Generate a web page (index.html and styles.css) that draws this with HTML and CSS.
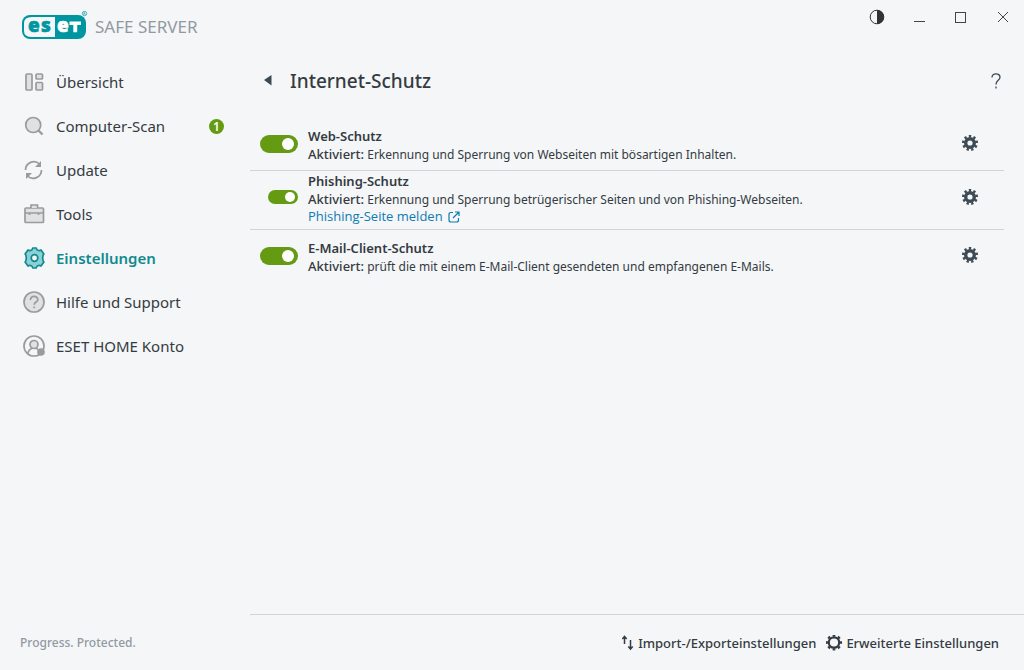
FILE: index.html
```html
<!DOCTYPE html>
<html lang="de">
<head>
  <meta charset="UTF-8" />
  <meta name="viewport" content="width=device-width, initial-scale=1.0"/>
  <title>ESET Safe Server</title>
  <link rel="stylesheet" href="styles.css">
</head>
<body>
  <!-- shared gear icon -->
  <svg class="defs" width="0" height="0" aria-hidden="true">
    <symbol id="gear" viewBox="0 0 16 16">
      <circle cx="8" cy="8" r="4.300" fill="none" stroke="currentColor" stroke-width="3.400"/>
      <circle cx="8" cy="8" r="6.700" fill="none" stroke="currentColor" stroke-width="2.600" pathLength="36" stroke-dasharray="2 2" stroke-dashoffset="1" transform="rotate(-90 8 8)"/>
    </symbol>
  </svg>

  <aside class="sidebar">
    <div class="brand">
      <svg class="logo" width="66" height="30" viewBox="0 0 66 30" role="img" aria-label="ESET">
        <rect x="0" y="5" width="64" height="24" rx="8" fill="#0096a1"/>
        <path d="M33 7H10Q2 7 2 13V21Q2 27 10 27H33Z" fill="#f4f6f8"/>
        <text class="logo-text" x="6 19" y="22" fill="#0096a1" stroke="#0096a1">es</text>
        <text class="logo-text" x="35" y="22" fill="#fff" stroke="#fff">e</text>
        <path d="M47.500 11.500H59V15H55.200V22.300H51.300V15H47.500Z" fill="#fff"/>
        <circle cx="62.500" cy="3.500" r="2.200" fill="none" stroke="#0096a1" stroke-width=".7"/>
        <path d="M61.900 4.800V2.500H62.700Q63.500 3.200 62.700 3.700H61.900M62.700 3.700L63.300 4.800" fill="none" stroke="#0096a1" stroke-width=".5"/>
      </svg>
      <span class="product">SAFE SERVER</span>
    </div>
    <nav class="menu">
      <a href="#">
        <svg width="24" height="24" viewBox="0 0 24 24" class="icon"><rect x="3" y="4" width="6" height="16" rx="1"/><rect x="13" y="4" width="6.500" height="5" rx="1"/><rect x="13" y="12.500" width="6.500" height="7.500" rx="1"/></svg>
        Übersicht
      </a>
      <a href="#">
        <svg width="24" height="24" viewBox="0 0 24 24" class="icon"><circle cx="10.200" cy="11" r="7.500"/><path d="M15.500 16.500L19.500 20.500" stroke-width="2.400"/></svg>
        Computer-Scan
        <span class="badge">1</span>
      </a>
      <a href="#">
        <svg width="24" height="24" viewBox="0 0 24 24" class="icon line"><path d="M2.500 12A8.300 8.300 0 0 1 16.500 6M18.500 12A8.300 8.300 0 0 1 4.500 18"/><path class="tip" d="M18 3V9H12ZM3 21V15H9Z"/></svg>
        Update
      </a>
      <a href="#">
        <svg width="24" height="24" viewBox="0 0 24 24" class="icon"><rect x="2" y="6" width="18.500" height="14.500" rx="1"/><path d="M8 6V3H14.500V6M2 11H20.500M6.500 11V13M15.500 11V13"/></svg>
        Tools
      </a>
      <a href="#" class="active" aria-current="page">
        <svg width="24" height="24" viewBox="0 0 24 24" class="icon"><path d="M8.200 4.200Q9.500 3.800 9.700 2H13.300Q13.500 3.800 14.800 4.200Q16.200 5 18 4L20.900 8Q19.500 9.500 19.800 12Q19.500 14.500 20.900 16L18 20Q16.200 19 14.800 19.800Q13.500 20.200 13.300 22H9.700Q9.500 20.200 8.200 19.800Q6.800 19 5 20L2.100 16Q3.500 14.500 3.200 12Q3.500 9.500 2.100 8L5 4Q6.800 5 8.200 4.200Z" stroke-linejoin="round"/><circle cx="11.500" cy="12" r="3.300" fill="#f4f6f8"/></svg>
        Einstellungen
      </a>
      <a href="#">
        <svg width="24" height="24" viewBox="0 0 24 24" class="icon"><circle cx="11" cy="12" r="10"/><path d="M7.500 10C7.500 5.300 14.800 5.300 14.800 9.800C14.800 12.200 11.200 12 11.200 14.800M11.200 16.500V18.200" fill="none"/></svg>
        Hilfe und Support
      </a>
      <a href="#">
        <svg width="24" height="24" viewBox="0 0 24 24" class="icon"><circle cx="11" cy="12" r="10" fill="none"/><path d="M5 19.500C5.300 16 7 15 9 14.500M17 19.500C16.700 16 15 15 13 14.500"/><circle cx="11" cy="10.500" r="4"/><circle class="dot" cx="18" cy="18" r="3.800"/></svg>
        ESET HOME Konto
      </a>
    </nav>
    <div class="slogan">Progress. Protected.</div>
  </aside>

  <main class="content">
    <div class="window-bar">
      <button aria-label="Kontrast"><svg width="16" height="16" viewBox="0 0 16 16"><circle cx="8" cy="8" r="6.800" fill="none" stroke="#333"/><path d="M8 1A7 7 0 0 1 8 15Z" fill="#333"/></svg></button>
      <button aria-label="Minimieren"><svg width="16" height="16" viewBox="0 0 16 16"><path d="M3 12.500H14" stroke="#444"/></svg></button>
      <button aria-label="Maximieren"><svg width="16" height="16" viewBox="0 0 16 16"><rect x="2.500" y="3.500" width="10" height="10" fill="none" stroke="#444"/></svg></button>
      <button aria-label="Schließen"><svg width="16" height="16" viewBox="0 0 16 16"><path d="M3 3L13 13M13 3L3 13" stroke="#444"/></svg></button>
    </div>

    <div class="title-row">
      <button class="back" aria-label="Zurück"><svg width="8" height="12" viewBox="0 0 8 12"><path d="M0 5L7.500 0V10.500Z" fill="#3c4a54"/></svg></button>
      <h1>Internet-Schutz</h1>
      <button class="help" aria-label="Hilfe"><svg width="12" height="18" viewBox="0 0 12 18"><path d="M2 5.500C2 .6 10 .6 10 5.200C10 8.500 6 8.200 6 12.500M6 14.500V16.500" fill="none" stroke="#3c4a54" stroke-width="1.300"/></svg></button>
    </div>

    <div class="modules">
      <div class="module">
        <div class="switch"><input type="checkbox" id="web" checked></div>
        <div class="text">
          <label for="web">Web-Schutz</label>
          <p><b>Aktiviert:</b> Erkennung und Sperrung von Webseiten mit bösartigen Inhalten.</p>
        </div>
        <button class="config" aria-label="Web-Schutz konfigurieren"><svg width="16" height="16"><use href="#gear"/></svg></button>
      </div>
      <div class="module sub">
        <div class="switch"><input type="checkbox" id="phishing" checked></div>
        <div class="text">
          <label for="phishing">Phishing-Schutz</label>
          <p><b>Aktiviert:</b> Erkennung und Sperrung betrügerischer Seiten und von Phishing-Webseiten.</p>
          <a href="#">Phishing-Seite melden <svg width="12" height="12" viewBox="0 0 12 12"><path d="M5 1.500H3Q1 1.500 1 3.500V9Q1 11 3 11H8.500Q10.500 11 10.500 9V7M7 1H11V5M11 1L5 7" fill="none" stroke="currentColor" stroke-width="1.200"/></svg></a>
        </div>
        <button class="config" aria-label="Phishing-Schutz konfigurieren"><svg width="16" height="16"><use href="#gear"/></svg></button>
      </div>
      <div class="module">
        <div class="switch"><input type="checkbox" id="mail" checked></div>
        <div class="text">
          <label for="mail">E-Mail-Client-Schutz</label>
          <p><b>Aktiviert:</b> prüft die mit einem E-Mail-Client gesendeten und empfangenen E-Mails.</p>
        </div>
        <button class="config" aria-label="E-Mail-Client-Schutz konfigurieren"><svg width="16" height="16"><use href="#gear"/></svg></button>
      </div>
    </div>

    <footer class="actions">
      <button>
        <svg width="12" height="16" viewBox="0 0 12 16"><path d="M2.500 9V2M.3 4L2.500 1.500L4.700 4M8.500 5V13.500M6.300 11.500L8.500 14L10.700 11.500" fill="none" stroke="currentColor" stroke-width="1.500"/></svg>
        Import-/Exporteinstellungen
      </button>
      <button>
        <svg width="16" height="16" viewBox="0 0 16 16"><circle cx="8" cy="7.500" r="5.200" fill="none" stroke="currentColor" stroke-width="2.200"/><circle cx="8" cy="7.500" r="6.900" fill="none" stroke="currentColor" stroke-width="2.200" pathLength="32" stroke-dasharray="2 2" stroke-dashoffset="1"/></svg>
        Erweiterte Einstellungen
      </button>
    </footer>
  </main>
</body>
</html>
```

FILE: styles.css
```css
* {
  box-sizing: border-box;
}

body {
  margin: 0;
  min-height: 100vh;
  display: grid;
  grid-template-columns: 250px 1fr;
  background: #f4f6f8;
  color: #343b42;
  font-family: "Noto Sans", "Open Sans", sans-serif;
  font-size: 13px;
  line-height: 18px;
}

.defs {
  position: absolute;
}

button {
  display: flex;
  align-items: center;
  padding: 0;
  border: none;
  background: none;
  color: inherit;
  font: inherit;
  cursor: pointer;
}

/* Sidebar */
.sidebar {
  display: flex;
  flex-direction: column;
  padding: 10px 20px 18px;
}

.brand {
  display: flex;
  align-items: center;
  gap: 7px;
  height: 30px;
  padding-left: 2px;
}

.logo-text {
  font-family: "Open Sans", sans-serif;
  font-size: 19px;
  font-weight: 800;
  stroke-width: 0.6;
}

.product {
  padding-top: 4px;
  color: #92999f;
  font-size: 17px;
}

.menu {
  margin-top: 20px;
}

.menu a {
  display: flex;
  align-items: center;
  gap: 9px;
  height: 44px;
  padding: 0 6px 0 3px;
  color: #343b42;
  font-size: 15px;
  text-decoration: none;
}

.menu .active {
  color: #118a8f;
  font-weight: 600;
}

.icon {
  fill: #dfe1e3;
  stroke: #999b9d;
  stroke-width: 1.7;
}

.icon.line {
  fill: none;
}

.icon .tip,
.icon .dot {
  fill: #999b9d;
  stroke: none;
}

.active .icon {
  fill: #8bd0d6;
  stroke: #118a8f;
}

.badge {
  width: 15px;
  margin-left: auto;
  border-radius: 50%;
  background: #649b12;
  color: #fff;
  font-size: 12px;
  font-weight: 600;
  line-height: 15px;
  text-align: center;
}

.slogan {
  margin-top: auto;
  color: #92999f;
  font-size: 12px;
  font-weight: 500;
}

/* Main area */
.content {
  display: flex;
  flex-direction: column;
}

.window-bar {
  display: flex;
  justify-content: flex-end;
  gap: 26px;
  padding: 9px 13px 0 0;
}

.title-row {
  display: flex;
  align-items: center;
  margin-top: 41px;
  padding: 0 22px 0 14px;
  height: 30px;
}

h1 {
  margin: 0 auto 0 18px;
  font-size: 19px;
  font-weight: 500;
  line-height: 30px;
}

.modules {
  margin: 22px 20px 0 0;
}

.module {
  display: flex;
  align-items: center;
  padding: 9px 26px 7px 0;
  border-bottom: 1px solid #d2d5d8;
}

.module:last-child {
  border-bottom: none;
}

.module.sub {
  padding-top: 1px;
  padding-bottom: 4px;
}

.switch {
  display: flex;
  justify-content: flex-end;
  width: 48px;
  padding-bottom: 2px;
}

.switch input {
  appearance: none;
  display: flex;
  align-items: center;
  justify-content: flex-end;
  width: 38px;
  height: 18px;
  margin: 0;
  padding-right: 4px;
  border-radius: 9px;
  background: #649b12;
}

.switch input::before {
  content: "";
  width: 12px;
  height: 12px;
  border-radius: 50%;
  background: #fff;
}

.switch input:not(:checked) {
  justify-content: flex-start;
  padding: 0 0 0 4px;
  background: #999b9d;
}

.sub .switch {
  padding-bottom: 4px;
}

.sub .switch input {
  width: 30px;
  height: 14px;
  padding-right: 3px;
}

.sub .switch input::before {
  width: 10px;
  height: 10px;
}

.text {
  flex: 1;
  padding-left: 10px;
}

.text label {
  display: block;
  font-weight: 600;
}

.text p {
  height: 18px;
  margin: 0;
  font-size: 12px;
}

.text b {
  font-size: 13px;
  font-weight: 500;
}

.text a {
  display: flex;
  align-items: center;
  gap: 5px;
  color: #0f7bb3;
  font-family: "Open Sans", sans-serif;
  font-weight: 500;
  line-height: 17px;
  text-decoration: none;
}

.config {
  padding-bottom: 4px;
  color: #3f4b54;
}

.actions {
  display: flex;
  justify-content: flex-end;
  gap: 10px;
  height: 56px;
  margin-top: auto;
  padding-right: 25px;
  border-top: 1px solid #d2d5d8;
}

.actions button {
  gap: 4px;
  font-weight: 500;
}
```
